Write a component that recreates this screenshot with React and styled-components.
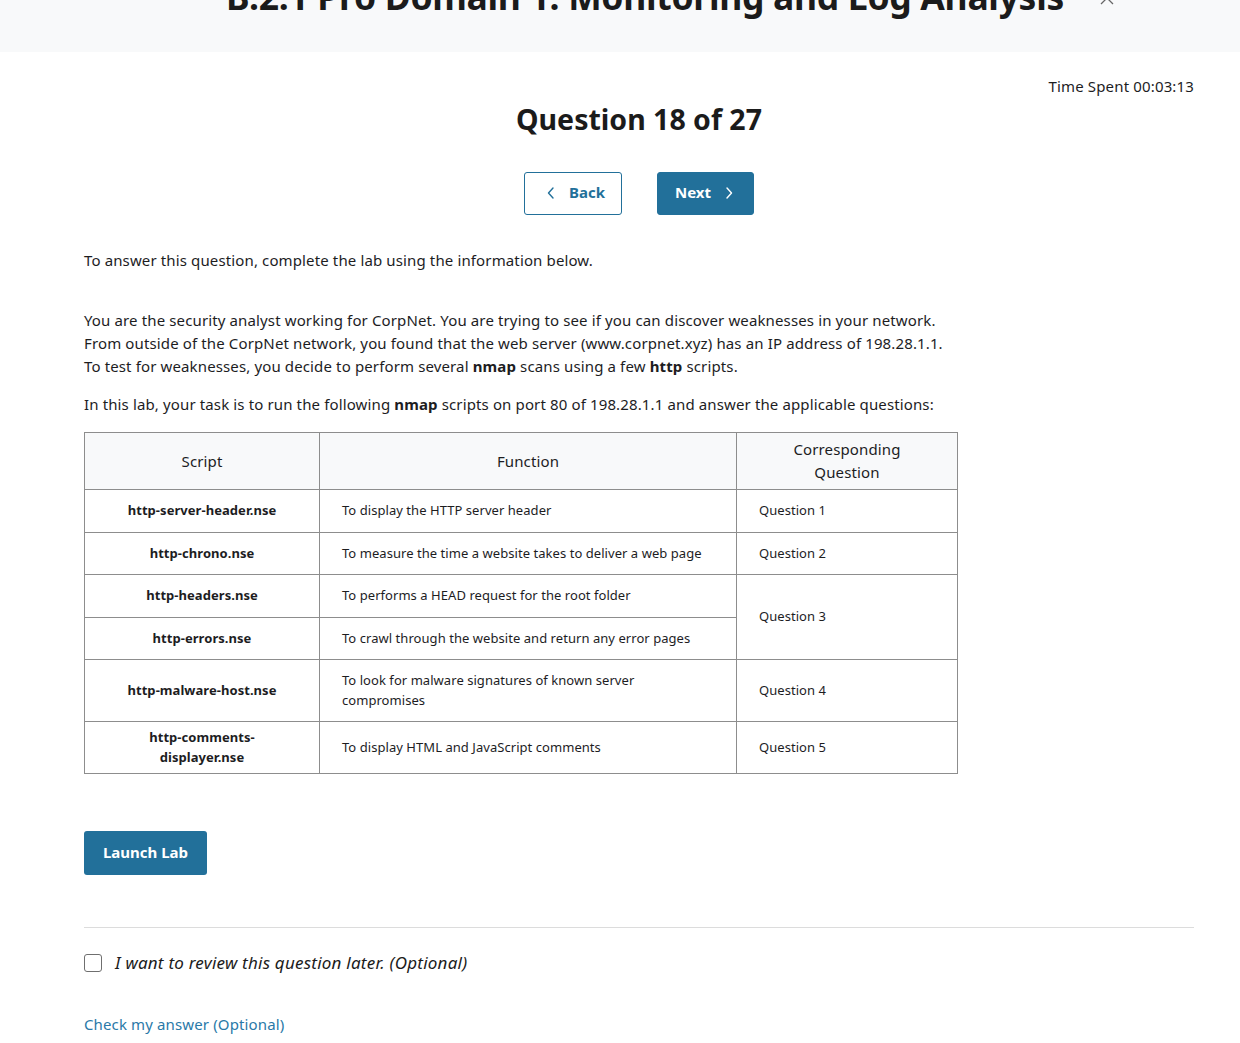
import React from "react";
import styled, { createGlobalStyle } from "styled-components";

const Global = createGlobalStyle`
  html, body { margin: 0; padding: 0; background: #fff; }
  body { font-family: "Noto Sans", "Open Sans", sans-serif; color: #1d1d1f; }
  * { box-sizing: border-box; }
`;

const TopBar = styled.header`
  height: 52px;
  background: #f8f9fa;
  overflow: hidden;
  display: flex;
  justify-content: center;
  align-items: flex-start;
  gap: 35px;
  padding-left: 101px;
`;

const ModuleTitle = styled.h1`
  margin: -28px 0 0;
  font-size: 35.5px;
  font-weight: 700;
  line-height: 48px;
  color: #1b1b1b;
  white-space: nowrap;
  letter-spacing: -0.3px;
`;

const CloseIcon = styled.span`
  margin-top: -10px;
  color: #666;
  display: flex;
`;

const Main = styled.main`
  padding: 23px 46px 40px 84px;
`;

const TimeRow = styled.div`
  display: flex;
  justify-content: flex-end;
  font-size: 15px;
  letter-spacing: 0.15px;
  line-height: 22px;
  color: #1d1d1f;
`;

const QTitle = styled.h2`
  margin: 2px 0 0;
  text-align: center;
  font-size: 28.5px;
  font-weight: 700;
  line-height: 40px;
  color: #1b1b1b;
`;

const NavRow = styled.div`
  display: flex;
  justify-content: center;
  gap: 35px;
  margin-top: 33px;
`;

const NavButton = styled.button`
  height: 43px;
  width: ${(p) => p.$w}px;
  border-radius: 3px;
  border: 1px solid #22709a;
  background: ${(p) => (p.$primary ? "#22709a" : "#fff")};
  color: ${(p) => (p.$primary ? "#fff" : "#22709a")};
  font-family: inherit;
  font-size: 15px;
  font-weight: 700;
  display: flex;
  align-items: center;
  justify-content: center;
  gap: 14px;
  padding: ${(p) => (p.$primary ? "0 3px 3px 0" : "0 0 3px 6px")};
  cursor: pointer;
  svg { margin-top: 2px; }
`;

const Para = styled.p`
  margin: ${(p) => p.$mt || 0}px 0 0;
  font-size: 15px;
  letter-spacing: 0.13px;
  line-height: 23px;
  color: #1d1d1f;
  b { font-weight: 700; }
`;

const Table = styled.table`
  margin-top: 16px;
  width: 873px;
  border-collapse: collapse;
  table-layout: fixed;
  font-size: 13px;
  letter-spacing: 0.05px;
  line-height: 19.5px;
  color: #1d1d1f;
`;

const Th = styled.th`
  border: 1px solid #8d8d8d;
  background: #f8f9fa;
  font-weight: 400;
  font-size: 15px;
  letter-spacing: 0.13px;
  line-height: 23px;
  padding: 5px 30px;
  text-align: center;
`;

const Td = styled.td`
  border: 1px solid #8d8d8d;
  padding: ${(p) => (p.$script ? "6px 30px" : "11px 22px")};
  text-align: ${(p) => (p.$script ? "center" : "left")};
  font-weight: ${(p) => (p.$script ? 700 : 400)};
  vertical-align: middle;
`;

const LaunchButton = styled.button`
  margin-top: 57px;
  height: 44px;
  width: 123px;
  border: none;
  border-radius: 3px;
  background: #22709a;
  color: #fff;
  font-family: inherit;
  font-size: 15px;
  font-weight: 700;
  padding: 0 0 2px;
  cursor: pointer;
`;

const Divider = styled.hr`
  margin: 52px 0 0;
  border: none;
  border-top: 1px solid #dcdcdc;
`;

const ReviewRow = styled.label`
  display: flex;
  align-items: center;
  gap: 13px;
  margin-top: 23px;
  font-size: 17px;
  letter-spacing: 0.23px;
  font-style: italic;
  line-height: 24px;
  color: #1b1b1b;
`;

const Box = styled.span`
  width: 18px;
  height: 18px;
  border: 1px solid #6f6f6f;
  border-radius: 3px;
  background: #fff;
  flex: none;
`;

const CheckLink = styled.a`
  display: inline-block;
  margin-top: 38px;
  font-size: 15px;
  letter-spacing: 0.13px;
  line-height: 22px;
  color: #2a79a8;
  text-decoration: none;
`;

const Chevron = ({ dir }) => (
  <svg width="8" height="12" viewBox="0 0 8 12" fill="none" stroke="currentColor" strokeWidth="1.4" strokeLinecap="round" strokeLinejoin="round">
    {dir === "left" ? <path d="M6 1 L1.5 6 L6 11" /> : <path d="M2 1 L6.5 6 L2 11" />}
  </svg>
);

const rows = [
  { s: "http-server-header.nse", f: "To display the HTTP server header", q: "Question 1" },
  { s: "http-chrono.nse", f: "To measure the time a website takes to deliver a web page", q: "Question 2" },
  { s: "http-headers.nse", f: "To performs a HEAD request for the root folder", q: "Question 3", span: 2 },
  { s: "http-errors.nse", f: "To crawl through the website and return any error pages", q: null },
  { s: "http-malware-host.nse", f: "To look for malware signatures of known server compromises", q: "Question 4" },
  { s: "http-comments-displayer.nse", f: "To display HTML and JavaScript comments", q: "Question 5" },
];

export default function App() {
  return (
    <>
      <Global />
      <TopBar>
        <ModuleTitle>B.2.1 Pro Domain 1: Monitoring and Log Analysis</ModuleTitle>
        <CloseIcon>
          <svg width="16" height="16" viewBox="0 0 16 16" fill="none" stroke="currentColor" strokeWidth="1.3">
            <path d="M2 2 L14 14 M14 2 L2 14" />
          </svg>
        </CloseIcon>
      </TopBar>
      <Main>
        <TimeRow>Time Spent 00:03:13</TimeRow>
        <QTitle>Question 18 of 27</QTitle>
        <NavRow>
          <NavButton $w={98}>
            <Chevron dir="left" />
            Back
          </NavButton>
          <NavButton $w={97} $primary>
            Next
            <Chevron dir="right" />
          </NavButton>
        </NavRow>
        <Para $mt={34}>To answer this question, complete the lab using the information below.</Para>
        <Para $mt={37}>
          You are the security analyst working for CorpNet. You are trying to see if you can discover weaknesses in your network.
          <br />
          From outside of the CorpNet network, you found that the web server (www.corpnet.xyz) has an IP address of 198.28.1.1.
          <br />
          To test for weaknesses, you decide to perform several <b>nmap</b> scans using a few <b>http</b> scripts.
        </Para>
        <Para $mt={15}>
          In this lab, your task is to run the following <b>nmap</b> scripts on port 80 of 198.28.1.1 and answer the applicable questions:
        </Para>
        <Table>
          <colgroup>
            <col style={{ width: 235 }} />
            <col style={{ width: 417 }} />
            <col style={{ width: 221 }} />
          </colgroup>
          <thead>
            <tr>
              <Th>Script</Th>
              <Th>Function</Th>
              <Th>Corresponding Question</Th>
            </tr>
          </thead>
          <tbody>
            {rows.map((r) => (
              <tr key={r.s}>
                <Td $script>{r.s}</Td>
                <Td>{r.f}</Td>
                {r.q && <Td rowSpan={r.span || 1}>{r.q}</Td>}
              </tr>
            ))}
          </tbody>
        </Table>
        <LaunchButton>Launch Lab</LaunchButton>
        <Divider />
        <ReviewRow>
          <Box />
          I want to review this question later. (Optional)
        </ReviewRow>
        <CheckLink href="#">Check my answer (Optional)</CheckLink>
      </Main>
    </>
  );
}
